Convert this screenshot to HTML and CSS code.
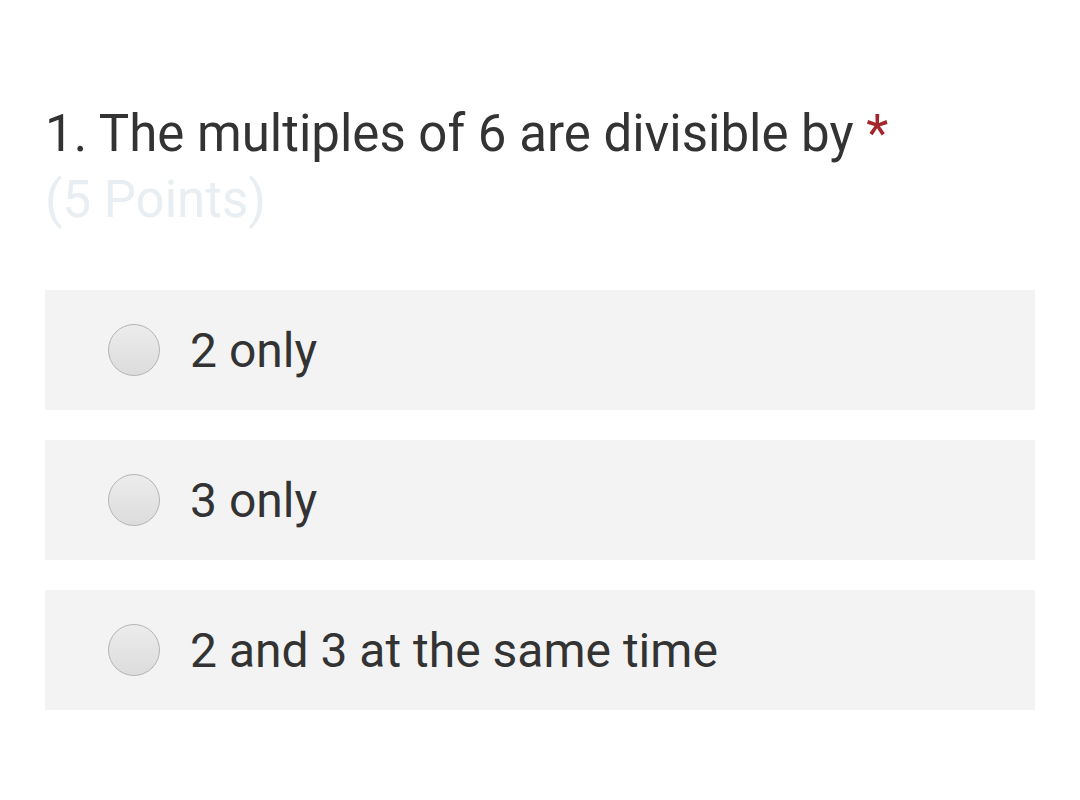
FILE: index.html
```html
<!DOCTYPE html>
<html>
<head>
<meta charset="utf-8">
<link rel="stylesheet" href="styles.css">
</head>
<body>
<div class="question">
  <div class="title">
    <span class="text">1. The multiples of 6 are divisible by</span>
    <span class="required">*</span>
  </div>
  <div class="points">(5 Points)</div>
  <div class="options">
    <label class="option"><span class="radio"></span><span class="label">2 only</span></label>
    <label class="option"><span class="radio"></span><span class="label">3 only</span></label>
    <label class="option"><span class="radio"></span><span class="label">2 and 3 at the same time</span></label>
  </div>
</div>
</body>
</html>
```

FILE: styles.css
```css
html, body {
  margin: 0;
  padding: 0;
  background: #ffffff;
}
body {
  font-family: Roboto, "Noto Sans", sans-serif;
  color: #333333;
}
.question {
  padding: 101px 45px 0 45px;
  width: 990px;
}
.title {
  font-size: 51px;
  line-height: 66px;
  padding-left: 0;
}
.required {
  color: #a4262c;
}
.points {
  font-size: 51px;
  line-height: 66px;
  color: #e8eef1;
  padding-left: 0;
}
.options {
  margin-top: 57px;
  display: flex;
  flex-direction: column;
  gap: 30px;
}
.option {
  height: 120px;
  background: #f3f3f3;
  display: flex;
  align-items: center;
  padding-left: 63px;
}
.radio {
  width: 50px;
  height: 50px;
  border-radius: 50%;
  border: 1px solid #b5b5b5;
  background: linear-gradient(#ececec, #dcdcdc);
  flex: none;
}
.label {
  font-size: 48px;
  margin-left: 30px;
  color: #333333;
}
```
